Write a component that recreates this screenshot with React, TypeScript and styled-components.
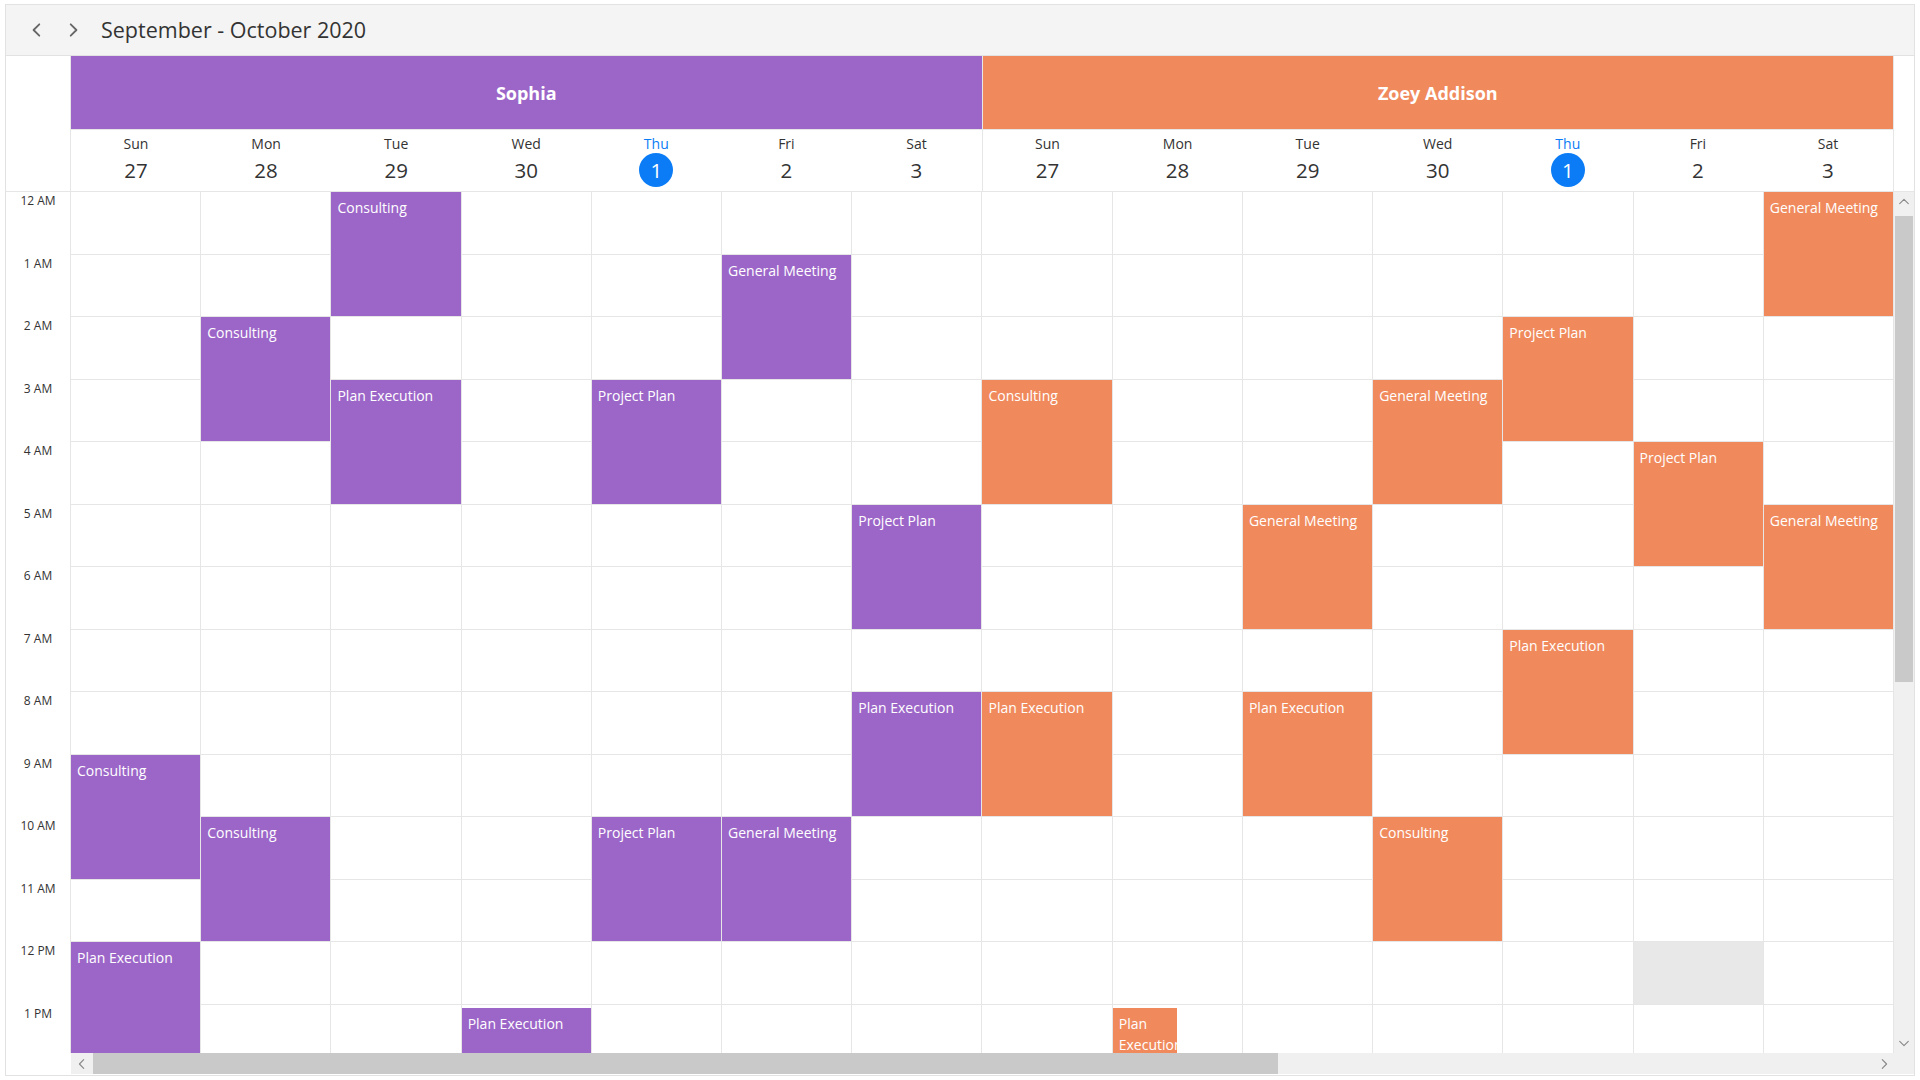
import React from "react";
import styled, { createGlobalStyle } from "styled-components";

const GlobalStyle = createGlobalStyle`
  html, body {
    margin: 0;
    padding: 0;
    background: #ffffff;
  }
  body {
    font-family: "Open Sans", "Noto Sans", Arial, sans-serif;
    color: #333333;
  }
`;

const PURPLE = "#9c66c8";
const ORANGE = "#f08a5d";
const LINE = "#e6e6e6";
const ROWS = 15;

const Scheduler = styled.div`
  margin: 4px 0 0 5px;
  width: 1910px;
  height: 1072px;
  box-sizing: border-box;
  border: 1px solid #e2e2e2;
  display: flex;
  flex-direction: column;
  background: #fff;
  overflow: hidden;
`;

const Toolbar = styled.div`
  flex: none;
  height: 51px;
  box-sizing: border-box;
  background: #f4f4f4;
  border-bottom: 1px solid #e2e2e2;
  display: flex;
  align-items: center;
  padding-left: 16px;
  gap: 6px;
`;

const NavButton = styled.button`
  width: 30px;
  height: 30px;
  padding: 0;
  border: none;
  background: transparent;
  display: flex;
  align-items: center;
  justify-content: center;
  cursor: pointer;
`;

const Title = styled.div`
  margin-left: 7px;
  font-size: 21.5px;
  color: #333;
  line-height: 30px;
`;

const HeaderArea = styled.div`
  flex: none;
  height: 136px;
  display: flex;
`;

const Corner = styled.div`
  width: 65px;
  flex: none;
  box-sizing: border-box;
  border-right: 1px solid ${LINE};
  border-bottom: 1px solid ${LINE};
`;

const ResourceGroups = styled.div`
  flex: 1;
  display: flex;
`;

const ResourceGroup = styled.div`
  flex: 1;
  display: flex;
  flex-direction: column;
  box-sizing: border-box;
  border-right: 1px solid ${LINE};
`;

const ResourceName = styled.div<{ $color: string }>`
  height: 74px;
  box-sizing: border-box;
  border-bottom: 1px solid ${LINE};
  background: ${(p) => p.$color};
  color: #fff;
  font-weight: 700;
  font-size: 18px;
  display: flex;
  align-items: center;
  justify-content: center;
`;

const DayRow = styled.div`
  height: 62px;
  box-sizing: border-box;
  border-bottom: 1px solid ${LINE};
  display: grid;
  grid-template-columns: repeat(7, 1fr);
`;

const DayCell = styled.div`
  display: flex;
  flex-direction: column;
  align-items: center;
  padding-top: 4px;
`;

const DayName = styled.div<{ $today?: boolean }>`
  font-size: 14px;
  line-height: 19px;
  color: ${(p) => (p.$today ? "#0b7cf5" : "#333")};
`;

const DateNumber = styled.div<{ $today?: boolean }>`
  width: 34px;
  height: 34px;
  border-radius: 50%;
  font-size: 20.5px;
  line-height: 34px;
  text-align: center;
  background: ${(p) => (p.$today ? "#0b7cf5" : "transparent")};
  color: ${(p) => (p.$today ? "#fff" : "#333")};
`;

const HeaderGutter = styled.div`
  width: 20px;
  flex: none;
  box-sizing: border-box;
  border-bottom: 1px solid ${LINE};
`;

const Body = styled.div`
  flex: none;
  height: 861px;
  display: flex;
  overflow: hidden;
`;

const TimeColumn = styled.div`
  width: 65px;
  flex: none;
  box-sizing: border-box;
  border-right: 1px solid ${LINE};
  overflow: hidden;
`;

const TimeLabel = styled.div`
  height: 62.5px;
  font-size: 12px;
  line-height: 16px;
  padding-top: 1px;
  box-sizing: border-box;
  text-align: center;
  color: #333;
`;

const DayGrid = styled.div`
  flex: 1;
  overflow: hidden;
  display: grid;
  grid-template-columns: repeat(14, 1fr);
  grid-template-rows: repeat(${ROWS}, 62.5px);
  grid-auto-rows: 62.5px;
  align-content: start;
`;

const Cell = styled.div<{ $row: number; $col: number; $shaded?: boolean }>`
  grid-row: ${(p) => p.$row + 1};
  grid-column: ${(p) => p.$col + 1};
  box-sizing: border-box;
  border-right: 1px solid ${LINE};
  border-bottom: 1px solid ${LINE};
  background: ${(p) => (p.$shaded ? "#e8e8e8" : "#fff")};
`;

const Event = styled.div<{
  $row: number;
  $span: number;
  $col: number;
  $color: string;
  $offset?: number;
  $half?: boolean;
}>`
  grid-row: ${(p) => `${p.$row + 1} / span ${p.$span}`};
  grid-column: ${(p) => p.$col + 1};
  z-index: 1;
  margin: ${(p) => p.$offset || 0}px 1px 1px 0;
  width: ${(p) => (p.$half ? "64px" : "auto")};
  background: ${(p) => p.$color};
  color: #fff;
  font-size: 14px;
  line-height: 21px;
  padding: 5px 6px 3px;
  box-sizing: border-box;
  overflow: hidden;
`;

const VScrollbar = styled.div`
  width: 20px;
  flex: none;
  background: #f0f0f0;
  display: flex;
  flex-direction: column;
  align-items: center;
`;

const ArrowBox = styled.div<{ $w?: number; $h?: number }>`
  flex: none;
  width: ${(p) => p.$w || 20}px;
  height: ${(p) => p.$h || 20}px;
  display: flex;
  align-items: center;
  justify-content: center;
`;

const VThumb = styled.div`
  margin-top: 4px;
  width: 18px;
  height: 466px;
  background: #c9c9c9;
`;

const Spacer = styled.div`
  flex: 1;
`;

const Footer = styled.div`
  flex: none;
  height: 21px;
  display: flex;
`;

const FooterCorner = styled.div`
  width: 65px;
  flex: none;
`;

const HScrollbar = styled.div`
  flex: 1;
  background: #f0f0f0;
  display: flex;
  align-items: stretch;
`;

const HThumb = styled.div`
  width: 1185px;
  background: #c9c9c9;
`;

const ScrollCorner = styled.div`
  width: 20px;
  flex: none;
  background: #f0f0f0;
`;

const Chevron = ({ dir, size = 14, color = "#666", stroke = 1.6 }: { dir: "left" | "right" | "up" | "down"; size?: number; color?: string; stroke?: number }) => {
  const pts = {
    left: "9,2 4,7 9,12",
    right: "5,2 10,7 5,12",
    up: "2,9 7,4 12,9",
    down: "2,5 7,10 12,5",
  }[dir];
  return (
    <svg width={size} height={size} viewBox="0 0 14 14">
      <polyline points={pts} fill="none" stroke={color} strokeWidth={stroke} strokeLinecap="round" strokeLinejoin="round" />
    </svg>
  );
};

const hours = [
  "12 AM", "1 AM", "2 AM", "3 AM", "4 AM", "5 AM", "6 AM", "7 AM", "8 AM", "9 AM", "10 AM", "11 AM",
  "12 PM", "1 PM",
];

const days = [
  { name: "Sun", date: 27 },
  { name: "Mon", date: 28 },
  { name: "Tue", date: 29 },
  { name: "Wed", date: 30 },
  { name: "Thu", date: 1, today: true },
  { name: "Fri", date: 2 },
  { name: "Sat", date: 3 },
];

const resources = [
  { name: "Sophia", color: PURPLE },
  { name: "Zoey Addison", color: ORANGE },
];

interface Appointment {
  subject: string;
  col: number;
  row: number;
  span: number;
  offset?: number;
  half?: boolean;
}

const sophia: Appointment[] = [
  { subject: "Consulting", col: 2, row: 0, span: 2 },
  { subject: "General Meeting", col: 5, row: 1, span: 2 },
  { subject: "Consulting", col: 1, row: 2, span: 2 },
  { subject: "Plan Execution", col: 2, row: 3, span: 2 },
  { subject: "Project Plan", col: 4, row: 3, span: 2 },
  { subject: "Project Plan", col: 6, row: 5, span: 2 },
  { subject: "Plan Execution", col: 6, row: 8, span: 2 },
  { subject: "Consulting", col: 0, row: 9, span: 2 },
  { subject: "Consulting", col: 1, row: 10, span: 2 },
  { subject: "Project Plan", col: 4, row: 10, span: 2 },
  { subject: "General Meeting", col: 5, row: 10, span: 2 },
  { subject: "Plan Execution", col: 0, row: 12, span: 2 },
  { subject: "Plan Execution", col: 3, row: 13, span: 2, offset: 3 },
];

const zoey: Appointment[] = [
  { subject: "General Meeting", col: 6, row: 0, span: 2 },
  { subject: "Project Plan", col: 4, row: 2, span: 2 },
  { subject: "Consulting", col: 0, row: 3, span: 2 },
  { subject: "General Meeting", col: 3, row: 3, span: 2 },
  { subject: "Project Plan", col: 5, row: 4, span: 2 },
  { subject: "General Meeting", col: 2, row: 5, span: 2 },
  { subject: "General Meeting", col: 6, row: 5, span: 2 },
  { subject: "Plan Execution", col: 4, row: 7, span: 2 },
  { subject: "Plan Execution", col: 0, row: 8, span: 2 },
  { subject: "Plan Execution", col: 2, row: 8, span: 2 },
  { subject: "Consulting", col: 3, row: 10, span: 2 },
  { subject: "Plan Execution", col: 1, row: 13, span: 2, offset: 3, half: true },
];

const App = () => {
  const cells = [];
  for (let r = 0; r < ROWS; r++) {
    for (let c = 0; c < 14; c++) {
      cells.push(<Cell key={`${r}-${c}`} $row={r} $col={c} $shaded={r === 12 && c === 12} />);
    }
  }

  return (
    <>
      <GlobalStyle />
      <Scheduler>
        <Toolbar>
          <NavButton>
            <Chevron dir="left" size={16} />
          </NavButton>
          <NavButton>
            <Chevron dir="right" size={16} />
          </NavButton>
          <Title>September - October 2020</Title>
        </Toolbar>

        <HeaderArea>
          <Corner />
          <ResourceGroups>
            {resources.map((res) => (
              <ResourceGroup key={res.name}>
                <ResourceName $color={res.color}>{res.name}</ResourceName>
                <DayRow>
                  {days.map((d) => (
                    <DayCell key={d.name}>
                      <DayName $today={d.today}>{d.name}</DayName>
                      <DateNumber $today={d.today}>{d.date}</DateNumber>
                    </DayCell>
                  ))}
                </DayRow>
              </ResourceGroup>
            ))}
          </ResourceGroups>
          <HeaderGutter />
        </HeaderArea>

        <Body>
          <TimeColumn>
            {hours.map((h) => (
              <TimeLabel key={h}>{h}</TimeLabel>
            ))}
          </TimeColumn>
          <DayGrid>
            {cells}
            {sophia.map((a, i) => (
              <Event key={`s${i}`} $row={a.row} $span={a.span} $col={a.col} $color={PURPLE} $offset={a.offset} $half={a.half}>
                {a.subject}
              </Event>
            ))}
            {zoey.map((a, i) => (
              <Event key={`z${i}`} $row={a.row} $span={a.span} $col={a.col + 7} $color={ORANGE} $offset={a.offset} $half={a.half}>
                {a.subject}
              </Event>
            ))}
          </DayGrid>
          <VScrollbar>
            <ArrowBox>
              <Chevron dir="up" size={12} color="#888" stroke={1.3} />
            </ArrowBox>
            <VThumb />
            <Spacer />
            <ArrowBox>
              <Chevron dir="down" size={12} color="#888" stroke={1.3} />
            </ArrowBox>
          </VScrollbar>
        </Body>

        <Footer>
          <FooterCorner />
          <HScrollbar>
            <ArrowBox $w={22} $h={21}>
              <Chevron dir="left" size={12} color="#888" stroke={1.3} />
            </ArrowBox>
            <HThumb />
            <Spacer />
            <ArrowBox $w={20} $h={21}>
              <Chevron dir="right" size={12} color="#888" stroke={1.3} />
            </ArrowBox>
          </HScrollbar>
          <ScrollCorner />
        </Footer>
      </Scheduler>
    </>
  );
};

export default App;
